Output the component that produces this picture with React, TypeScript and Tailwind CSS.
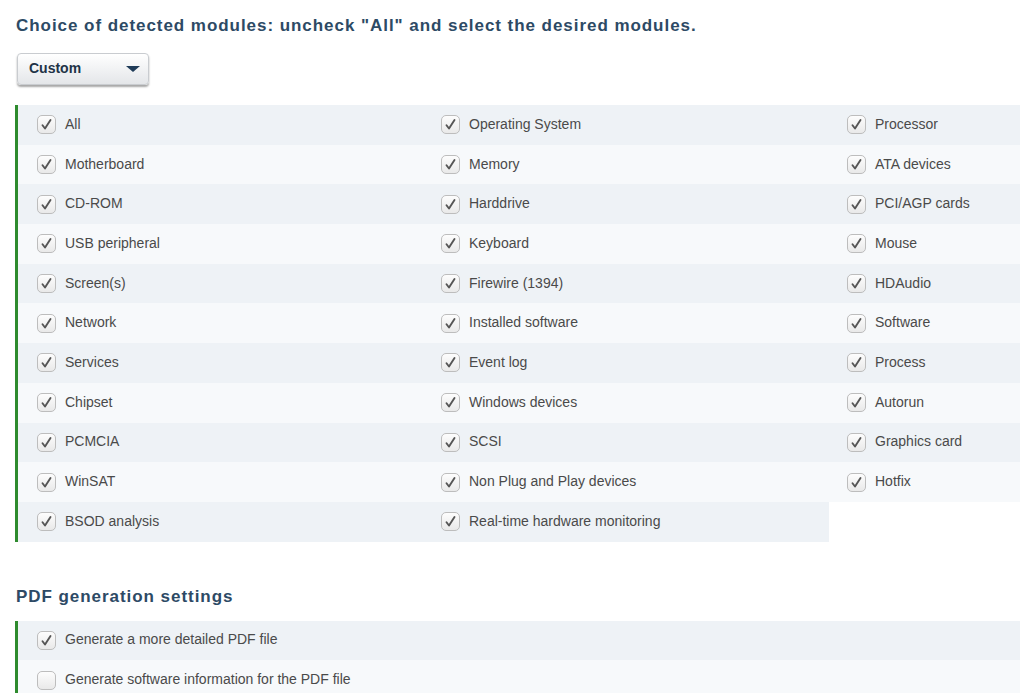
const MODULES: string[][] = [
  ["All", "Operating System", "Processor"],
  ["Motherboard", "Memory", "ATA devices"],
  ["CD-ROM", "Harddrive", "PCI/AGP cards"],
  ["USB peripheral", "Keyboard", "Mouse"],
  ["Screen(s)", "Firewire (1394)", "HDAudio"],
  ["Network", "Installed software", "Software"],
  ["Services", "Event log", "Process"],
  ["Chipset", "Windows devices", "Autorun"],
  ["PCMCIA", "SCSI", "Graphics card"],
  ["WinSAT", "Non Plug and Play devices", "Hotfix"],
  ["BSOD analysis", "Real-time hardware monitoring"],
];

const PDF_OPTIONS = [
  { label: "Generate a more detailed PDF file", checked: true },
  { label: "Generate software information for the PDF file", checked: false },
];

function Box({ checked }: { checked: boolean }) {
  return (
    <span className="w-[19px] h-[19px] rounded-[5px] border border-[#bdbdbd] bg-gradient-to-b from-[#fdfdfd] to-[#e9e9e9] flex items-center justify-center shrink-0">
      {checked && (
        <svg width="13" height="13" viewBox="0 0 13 13">
          <path d="M2.5 7.2 L5 10.5 L10.5 2" fill="none" stroke="#555" strokeWidth="1.9" strokeLinecap="round" strokeLinejoin="round" />
        </svg>
      )}
    </span>
  );
}

const WIDTHS = ["w-[404.5px] pl-[19px]", "w-[406.5px] pl-[18.5px]", "flex-1 pl-[18px]"];

function Cell({ label, dark, col }: { label: string; dark: boolean; col: number }) {
  return (
    <div
      className={`h-[39.7px] flex items-center gap-[9px] ${WIDTHS[col]} ${
        dark ? "bg-[#eef2f6]" : "bg-[#f7f9fb]"
      }`}
    >
      <Box checked />
      <span className="text-[14px] text-[#4a4a4a] -mt-[1px]">{label}</span>
    </div>
  );
}

export default function App() {
  return (
    <div className="w-[1020px] h-[693px] overflow-hidden bg-white font-['Liberation_Sans',Arial,sans-serif]">
      <h2 className="pl-[16px] pt-[15px] text-[17px] font-bold text-[#2d4a65] tracking-[0.95px] leading-[22px]">
        Choice of detected modules: uncheck "All" and select the desired modules.
      </h2>

      {/* Sélecteur */}
      <div className="ml-[17px] mt-[16px] w-[132px] h-[32px] rounded-[4px] border border-[#c9ccd0] bg-gradient-to-b from-[#ffffff] to-[#e4e6e9] shadow-[0_2px_2px_rgba(0,0,0,0.35)] flex items-center justify-between pl-[11px] pr-[8px]">
        <span className="text-[14px] font-bold text-[#1f3347] -mt-[2px]">Custom</span>
        <span className="w-0 h-0 border-l-[7px] border-r-[7px] border-t-[6px] border-l-transparent border-r-transparent border-t-[#1f3b58]" />
      </div>

      {/* Modules */}
      <div className="mt-[20px] ml-[15px] border-l-[3px] border-[#2e8b2e]">
        {MODULES.map((row, i) => (
          <div key={i} className="flex">
            {row.map((label, j) => (
              <Cell key={label} label={label} dark={i % 2 === 0} col={j} />
            ))}
          </div>
        ))}
      </div>

      <h2 className="pl-[16px] mt-[44px] text-[17px] font-bold text-[#2d4a65] tracking-[0.95px] leading-[22px]">
        PDF generation settings
      </h2>

      <div className="mt-[13px] ml-[15px] border-l-[3px] border-[#2e8b2e]">
        {PDF_OPTIONS.map((o, i) => (
          <div
            key={o.label}
            className={`h-[39.7px] flex items-center gap-[9px] pl-[19px] ${i % 2 === 0 ? "bg-[#eef2f6]" : "bg-[#f7f9fb]"}`}
          >
            <Box checked={o.checked} />
            <span className="text-[14px] text-[#4a4a4a] -mt-[1px]">{o.label}</span>
          </div>
        ))}
      </div>
    </div>
  );
}
